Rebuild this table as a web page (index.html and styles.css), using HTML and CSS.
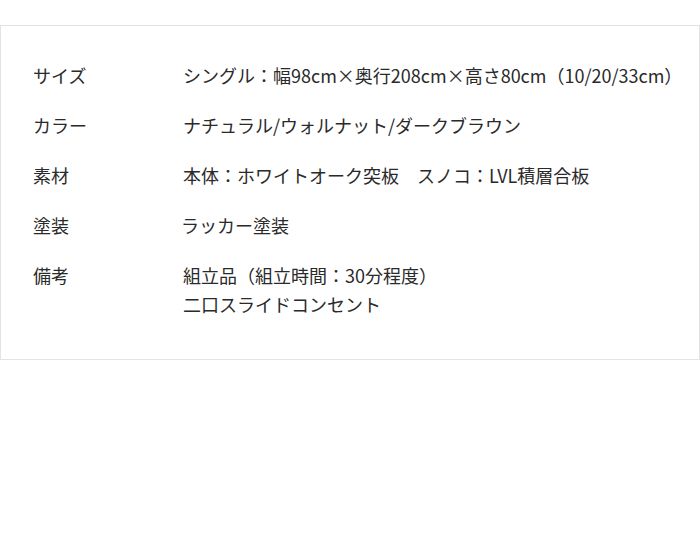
FILE: index.html
```html
<!DOCTYPE html>
<html lang="ja">
<head>
<meta charset="utf-8">
<link rel="stylesheet" href="styles.css">
</head>
<body>
<div class="spec">
  <dl class="rows">
    <div class="row"><dt>サイズ</dt><dd>シングル：幅98cm×奥行208cm×高さ80cm（10/20/33cm）</dd></div>
    <div class="row"><dt>カラー</dt><dd>ナチュラル/ウォルナット/ダークブラウン</dd></div>
    <div class="row"><dt>素材</dt><dd>本体：ホワイトオーク突板　スノコ：LVL積層合板</dd></div>
    <div class="row"><dt>塗装</dt><dd class="shift">ラッカー塗装</dd></div>
    <div class="row"><dt>備考</dt><dd>組立品（組立時間：30分程度）<br>二口スライドコンセント</dd></div>
  </dl>
</div>
</body>
</html>
```
FILE: styles.css
```css
html, body { margin: 0; padding: 0; background: #fff; }
body {
  font-family: "Noto Sans CJK JP", "Noto Sans", sans-serif;
  color: #2a2a2a;
  font-size: 18px;
}
.spec {
  margin-top: 25px;
  width: 700px;
  height: 335px;
  box-sizing: border-box;
  border: 1px solid #e3e3e3;
  padding: 35px 0 0 32px;
}
.rows { margin: 0; display: flex; flex-direction: column; gap: 21px; }
.row { display: flex; line-height: 29px; }
dt { width: 150px; flex: none; }
dd { margin: 0; }
dd.shift { margin-left: -2px; }
```
